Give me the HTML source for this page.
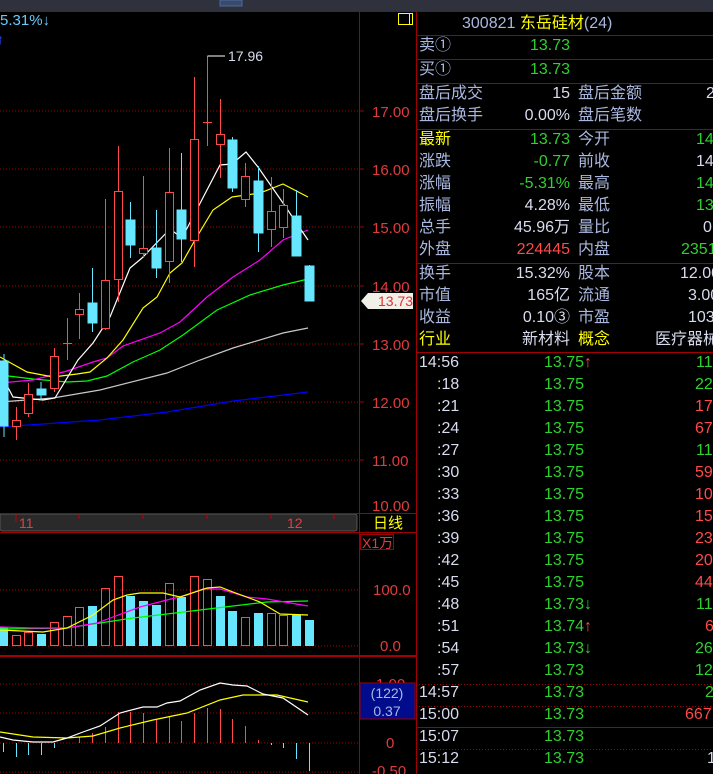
<!DOCTYPE html>
<html><head><meta charset="utf-8"><style>
html,body{margin:0;padding:0;background:#000;width:713px;height:774px;overflow:hidden;position:relative;font-family:"Liberation Sans","Noto Sans CJK SC",sans-serif}
.t{position:absolute;font-size:16px;line-height:18px;white-space:nowrap}
.l{color:#aab8e0}.g{color:#2fd02f}.r{color:#ff4a4a}.y{color:#ffff00}.w{color:#d8dcee}
.ra{text-align:right}
</style></head><body>
<svg width="713" height="774" style="position:absolute;left:0;top:0" xmlns="http://www.w3.org/2000/svg" font-family="Liberation Sans, Noto Sans CJK SC, sans-serif">
<rect x="0" y="0" width="713" height="11" fill="#2f323c"/>
<rect x="220" y="0" width="22" height="6" fill="#3a4a6a" stroke="#4a6aa0"/>
<line x1="0" y1="11.5" x2="713" y2="11.5" stroke="#a00000"/>
<g stroke="#a00000" stroke-dasharray="1,2">
<line x1="0" y1="111" x2="359" y2="111"/><line x1="0" y1="169" x2="359" y2="169"/><line x1="0" y1="227" x2="359" y2="227"/><line x1="0" y1="286" x2="359" y2="286"/><line x1="0" y1="344" x2="359" y2="344"/><line x1="0" y1="402" x2="359" y2="402"/><line x1="0" y1="460" x2="359" y2="460"/>
<line x1="0" y1="590" x2="359" y2="590"/><line x1="0" y1="646" x2="359" y2="646"/>
<line x1="0" y1="684" x2="359" y2="684"/><line x1="0" y1="713" x2="359" y2="713"/><line x1="0" y1="743" x2="359" y2="743"/><line x1="0" y1="772" x2="359" y2="772"/>
</g>
<line x1="359.5" y1="12" x2="359.5" y2="774" stroke="#a00000"/>
<line x1="416.5" y1="12" x2="416.5" y2="774" stroke="#a00000"/>
<rect x="0" y="514" width="357" height="17" fill="#2a2a2a" stroke="#555" rx="2"/>
<line x1="0" y1="513.5" x2="416" y2="513.5" stroke="#a00000"/>
<line x1="0" y1="532.5" x2="416" y2="532.5" stroke="#a00000"/>
<g stroke="#c00000" stroke-width="1"><line x1="16" y1="514" x2="16" y2="522"/><line x1="79" y1="514" x2="79" y2="519"/><line x1="143" y1="514" x2="143" y2="519"/><line x1="207" y1="514" x2="207" y2="519"/><line x1="271" y1="514" x2="271" y2="519"/><line x1="334" y1="514" x2="334" y2="519"/></g>
<text x="19" y="528" fill="#e04040" font-size="14">11</text>
<text x="287" y="528" fill="#e04040" font-size="14">12</text>
<line x1="0" y1="656" x2="416" y2="656" stroke="#a00000" stroke-width="2"/>
<g fill="#e03c3c" font-size="15">
<text x="372" y="117">17.00</text><text x="372" y="175">16.00</text><text x="372" y="233">15.00</text><text x="372" y="292">14.00</text><text x="372" y="350">13.00</text><text x="372" y="408">12.00</text><text x="372" y="466">11.00</text><text x="372" y="511">10.00</text>
<text x="373" y="595">100.0</text><text x="380" y="651">0.0</text><text x="386" y="748">0</text><text x="372" y="776">-0.50</text><text x="376" y="689">1.00</text>
</g>
<g stroke="#a00000"><line x1="359" y1="111" x2="364" y2="111"/><line x1="359" y1="169" x2="364" y2="169"/><line x1="359" y1="227" x2="364" y2="227"/><line x1="359" y1="286" x2="364" y2="286"/><line x1="359" y1="344" x2="364" y2="344"/><line x1="359" y1="402" x2="364" y2="402"/><line x1="359" y1="460" x2="364" y2="460"/></g>
<polygon points="361,301 368,293 413,293 413,309 368,309" fill="#f0f0e8"/>
<text x="378" y="306" fill="#e03030" font-size="14">13.73</text>
<text x="373" y="528" fill="#ffff00" font-size="15">日线</text>
<rect x="360.5" y="534.5" width="33" height="15" fill="none" stroke="#a00000"/>
<text x="362" y="548" fill="#e03c3c" font-size="14">X1万</text>
<rect x="360" y="683" width="55" height="36" fill="#000c8c" stroke="#a00000"/>
<text x="387" y="698" fill="#aab8e0" font-size="14" text-anchor="middle">(122)</text>
<text x="387" y="716" fill="#aab8e0" font-size="14" text-anchor="middle">0.37</text>
<rect x="398.5" y="13.5" width="14" height="11" fill="none" stroke="#ffff00"/>
<line x1="409.5" y1="13" x2="409.5" y2="25" stroke="#ffff00"/>
<text x="0" y="25" fill="#66ccff" font-size="15">5.31%↓</text>
<text x="-3" y="44" fill="#2244ff" font-size="14">↑</text>
<g fill="none" stroke-width="1.2">
<polyline stroke="#0000ff" points="0,427 100,420 167,412 233,401 308,392"/>
<polyline stroke="#c8c8c8" points="0,402 53,398 100,390 167,373 200,360 233,348 283,333 308,328"/>
<polyline stroke="#00ff00" points="0,375 33,379 67,382 87,381 107,376 133,362 160,350 183,335 217,310 250,295 283,285 308,279"/>
<polyline stroke="#ff00ff" points="0,383 33,380 67,371 93,362 107,358 123,346 160,333 180,322 207,297 233,277 260,260 283,240 308,230"/>
<polyline stroke="#ffff00" points="0,357 27,372 53,377 77,374 90,372 107,358 123,340 143,308 157,297 170,273 182,263 195,240 213,210 232,197 260,193 283,184 308,197"/>
<polyline stroke="#ffffff" points="3,378 13,397 43,400 55,398 78,360 93,343 110,317 130,268 142,258 170,229 182,238 220,165 232,164 246,152 258,167 283,203 308,240"/>
</g>
<g stroke-width="1">
<g stroke="#66e6ff" fill="#66e6ff">
<line x1="4" y1="354" x2="4" y2="437"/><rect x="0" y="361" width="8" height="65"/>
<line x1="41" y1="382" x2="41" y2="400"/><rect x="37" y="389" width="9" height="6"/>
<line x1="92.5" y1="268" x2="92.5" y2="332"/><rect x="88" y="303" width="9" height="20"/>
<line x1="130.5" y1="202" x2="130.5" y2="258"/><rect x="126" y="220" width="9" height="25"/>
<line x1="156.5" y1="210" x2="156.5" y2="278"/><rect x="152" y="248" width="9" height="20"/>
<line x1="181.5" y1="153" x2="181.5" y2="262"/><rect x="177" y="210" width="9" height="29"/>
<line x1="232.5" y1="137" x2="232.5" y2="192"/><rect x="228" y="140" width="9" height="48"/>
<line x1="258.5" y1="166" x2="258.5" y2="252"/><rect x="254" y="181" width="9" height="52"/>
<line x1="296.5" y1="190" x2="296.5" y2="256"/><rect x="292" y="216" width="9" height="40"/>
<line x1="309.5" y1="265" x2="309.5" y2="301"/><rect x="305" y="266" width="9" height="35"/>
</g>
<g stroke="#ff4a4a" fill="#000">
<line x1="16.5" y1="407" x2="16.5" y2="440"/><rect x="12.5" y="420.5" width="8" height="6"/>
<line x1="28.5" y1="383" x2="28.5" y2="417"/><rect x="24.5" y="394.5" width="8" height="19"/>
<line x1="54.5" y1="348" x2="54.5" y2="392"/><rect x="50.5" y="356.5" width="8" height="32"/>
<line x1="67.5" y1="318" x2="67.5" y2="360"/><line x1="63" y1="343.5" x2="72" y2="343.5"/>
<line x1="79.5" y1="293" x2="79.5" y2="339"/><rect x="75.5" y="309.5" width="8" height="5"/>
<line x1="105.5" y1="199" x2="105.5" y2="330"/><rect x="101.5" y="280.5" width="8" height="48"/>
<line x1="118.5" y1="146" x2="118.5" y2="302"/><rect x="114.5" y="191.5" width="8" height="88"/>
<line x1="143.5" y1="176" x2="143.5" y2="258"/><rect x="139.5" y="248.5" width="8" height="5"/>
<line x1="169.5" y1="148" x2="169.5" y2="283"/><rect x="165.5" y="192.5" width="8" height="69"/>
<line x1="194.5" y1="77" x2="194.5" y2="267"/><rect x="190.5" y="139.5" width="8" height="101"/>
<line x1="207.5" y1="56" x2="207.5" y2="146"/><line x1="203" y1="122.5" x2="212" y2="122.5"/>
<line x1="220.5" y1="99" x2="220.5" y2="178"/><rect x="216.5" y="134.5" width="8" height="10"/>
<line x1="245.5" y1="163" x2="245.5" y2="207"/><rect x="241.5" y="176.5" width="8" height="23"/>
<line x1="271.5" y1="177" x2="271.5" y2="247"/><rect x="267.5" y="211.5" width="8" height="18"/>
<line x1="283.5" y1="189" x2="283.5" y2="238"/><rect x="279.5" y="205.5" width="8" height="22"/>
</g>
</g>
<polyline points="207.5,56 225,56" stroke="#fff" fill="none"/>
<text x="228" y="61" fill="#d8dcee" font-size="14">17.96</text>
<g fill="#66e6ff">
<rect x="0" y="627" width="8" height="19"/><rect x="37" y="634" width="9" height="12"/><rect x="88" y="606" width="9" height="40"/><rect x="126" y="596" width="9" height="50"/><rect x="139" y="601" width="9" height="45"/><rect x="152" y="605" width="9" height="41"/><rect x="177" y="597" width="9" height="49"/><rect x="216" y="596" width="9" height="50"/><rect x="228" y="611" width="9" height="35"/><rect x="254" y="613" width="9" height="33"/><rect x="292" y="615" width="9" height="31"/><rect x="305" y="620" width="9" height="26"/>
</g>
<g fill="none" stroke="#ff4a4a">
<rect x="12.5" y="635.5" width="8" height="10"/><rect x="24.5" y="632.5" width="8" height="13"/><rect x="50.5" y="622.5" width="8" height="23"/><rect x="63.5" y="616.5" width="8" height="29"/><rect x="75.5" y="607.5" width="8" height="38"/><rect x="101.5" y="588.5" width="8" height="57"/><rect x="114.5" y="576.5" width="8" height="69"/><rect x="165.5" y="583.5" width="8" height="62"/><rect x="190.5" y="576.5" width="8" height="69"/><rect x="203.5" y="579.5" width="8" height="66"/><rect x="241.5" y="617.5" width="8" height="28"/><rect x="267.5" y="613.5" width="8" height="32"/><rect x="279.5" y="615.5" width="8" height="30"/>
</g>
<g fill="none" stroke-width="1.2">
<polyline stroke="#00ff00" points="0,629 67,628 100,623 133,618 167,614 200,610 233,606 267,602 308,601"/>
<polyline stroke="#ff00ff" points="0,627 33,628 67,628 97,623 113,617 140,607 167,600 187,595 203,589 220,589 247,597 267,599 308,606"/>
<polyline stroke="#ffff00" points="0,630 43,632 67,628 93,615 113,600 127,595 140,593 163,593 180,597 207,588 220,587 233,592 260,602 280,614 308,615"/>
</g>
<g stroke="#ff4a4a"><line x1="79.5" y1="743" x2="79.5" y2="737"/><line x1="92.5" y1="743" x2="92.5" y2="733"/><line x1="105.5" y1="743" x2="105.5" y2="727"/><line x1="118.5" y1="743" x2="118.5" y2="712"/><line x1="130.5" y1="743" x2="130.5" y2="712"/><line x1="143.5" y1="743" x2="143.5" y2="713"/><line x1="156.5" y1="743" x2="156.5" y2="720"/><line x1="169.5" y1="743" x2="169.5" y2="716"/><line x1="181.5" y1="743" x2="181.5" y2="721"/><line x1="194.5" y1="743" x2="194.5" y2="713"/><line x1="207.5" y1="743" x2="207.5" y2="708"/><line x1="220.5" y1="743" x2="220.5" y2="709"/><line x1="232.5" y1="743" x2="232.5" y2="719"/><line x1="245.5" y1="743" x2="245.5" y2="726"/><line x1="258.5" y1="743" x2="258.5" y2="740"/></g>
<g stroke="#66e6ff"><line x1="3.5" y1="743" x2="3.5" y2="752"/><line x1="16.5" y1="743" x2="16.5" y2="757"/><line x1="28.5" y1="743" x2="28.5" y2="755"/><line x1="41.5" y1="743" x2="41.5" y2="755"/><line x1="54.5" y1="743" x2="54.5" y2="748"/><line x1="271.5" y1="743" x2="271.5" y2="745"/><line x1="283.5" y1="743" x2="283.5" y2="748"/><line x1="296.5" y1="743" x2="296.5" y2="759"/><line x1="309.5" y1="743" x2="309.5" y2="771"/></g>
<g fill="none" stroke-width="1.2">
<polyline stroke="#ffff00" points="0,732 33,737 67,738 93,736 120,728 153,720 187,713 220,700 243,695 277,695 308,702"/>
<polyline stroke="#ffffff" points="0,737 13,740 33,742 53,742 67,738 83,732 100,726 120,713 143,707 157,707 167,703 180,701 200,690 220,683 233,685 247,686 263,694 283,698 308,715"/>
</g>
<g stroke="#a00000"><line x1="416" y1="35.5" x2="713" y2="35.5"/><line x1="416" y1="59.5" x2="713" y2="59.5"/><line x1="416" y1="83.5" x2="713" y2="83.5"/><line x1="416" y1="129.5" x2="713" y2="129.5"/><line x1="416" y1="263.5" x2="713" y2="263.5"/><line x1="416" y1="352.5" x2="713" y2="352.5"/><line x1="416" y1="727.5" x2="713" y2="727.5"/></g>
<g stroke="#a00000" stroke-dasharray="1,2"><line x1="416" y1="684.5" x2="713" y2="684.5"/><line x1="416" y1="706.5" x2="713" y2="706.5"/><line x1="416" y1="749.5" x2="713" y2="749.5"/></g>
</svg>
<div class="t" style="left:462px;top:15px;width:150px;text-align:center"><span class="l">300821 </span><span class="y">东岳硅材</span><span class="l">(24)</span></div>
<div class="t l" style="left:419px;top:37px">卖①</div><div class="t g" style="left:530px;top:37px">13.73</div>
<div class="t l" style="left:419px;top:61px">买①</div><div class="t g" style="left:530px;top:61px">13.73</div>
<div class="t l" style="left:419px;top:85px">盘后成交</div><div class="t w ra" style="left:500px;top:85px;width:70px">15</div><div class="t l" style="left:578px;top:85px">盘后金额</div><div class="t w" style="left:706px;top:85px">2</div>
<div class="t l" style="left:419px;top:107px">盘后换手</div><div class="t w ra" style="left:500px;top:107px;width:70px">0.00%</div><div class="t l" style="left:578px;top:107px">盘后笔数</div>
<div class="t y" style="left:419px;top:131px">最新</div><div class="t g ra" style="left:480px;top:131px;width:90px">13.73</div><div class="t l" style="left:578px;top:131px">今开</div><div class="t g" style="left:696px;top:131px">14.21</div>
<div class="t l" style="left:419px;top:153px">涨跌</div><div class="t g ra" style="left:480px;top:153px;width:90px">-0.77</div><div class="t l" style="left:578px;top:153px">前收</div><div class="t w" style="left:696px;top:153px">14.50</div>
<div class="t l" style="left:419px;top:175px">涨幅</div><div class="t g ra" style="left:480px;top:175px;width:90px">-5.31%</div><div class="t l" style="left:578px;top:175px">最高</div><div class="t g" style="left:696px;top:175px">14.30</div>
<div class="t l" style="left:419px;top:197px">振幅</div><div class="t w ra" style="left:480px;top:197px;width:90px">4.28%</div><div class="t l" style="left:578px;top:197px">最低</div><div class="t g" style="left:696px;top:197px">13.68</div>
<div class="t l" style="left:419px;top:219px">总手</div><div class="t w ra" style="left:480px;top:219px;width:90px">45.96万</div><div class="t l" style="left:578px;top:219px">量比</div><div class="t w" style="left:703px;top:219px">0.9</div>
<div class="t l" style="left:419px;top:241px">外盘</div><div class="t r ra" style="left:480px;top:241px;width:90px">224445</div><div class="t l" style="left:578px;top:241px">内盘</div><div class="t g" style="left:681px;top:241px">235151</div>
<div class="t l" style="left:419px;top:265px">换手</div><div class="t w ra" style="left:480px;top:265px;width:90px">15.32%</div><div class="t l" style="left:578px;top:265px">股本</div><div class="t w" style="left:680px;top:265px">12.00亿</div>
<div class="t l" style="left:419px;top:287px">市值</div><div class="t w ra" style="left:480px;top:287px;width:90px">165亿</div><div class="t l" style="left:578px;top:287px">流通</div><div class="t w" style="left:688px;top:287px">3.00亿</div>
<div class="t l" style="left:419px;top:309px">收益</div><div class="t w ra" style="left:480px;top:309px;width:90px">0.10③</div><div class="t l" style="left:578px;top:309px">市盈</div><div class="t w" style="left:688px;top:309px">103.3</div>
<div class="t y" style="left:419px;top:331px">行业</div><div class="t w ra" style="left:480px;top:331px;width:90px">新材料</div><div class="t y" style="left:578px;top:331px">概念</div><div class="t w" style="left:655px;top:331px">医疗器械</div>
<div class="t w" style="left:419px;top:354px">14:56</div><div class="t g" style="left:544px;top:354px">13.75<span class="r">↑</span></div><div class="t g" style="left:696px;top:354px">11</div>
<div class="t w" style="left:437px;top:376px">:18</div><div class="t g" style="left:544px;top:376px">13.75</div><div class="t g" style="left:695px;top:376px">22</div>
<div class="t w" style="left:437px;top:398px">:21</div><div class="t g" style="left:544px;top:398px">13.75</div><div class="t r" style="left:695px;top:398px">17</div>
<div class="t w" style="left:437px;top:420px">:24</div><div class="t g" style="left:544px;top:420px">13.75</div><div class="t r" style="left:695px;top:420px">67</div>
<div class="t w" style="left:437px;top:442px">:27</div><div class="t g" style="left:544px;top:442px">13.75</div><div class="t g" style="left:696px;top:442px">11</div>
<div class="t w" style="left:437px;top:464px">:30</div><div class="t g" style="left:544px;top:464px">13.75</div><div class="t r" style="left:695px;top:464px">59</div>
<div class="t w" style="left:437px;top:486px">:33</div><div class="t g" style="left:544px;top:486px">13.75</div><div class="t r" style="left:695px;top:486px">10</div>
<div class="t w" style="left:437px;top:508px">:36</div><div class="t g" style="left:544px;top:508px">13.75</div><div class="t r" style="left:695px;top:508px">15</div>
<div class="t w" style="left:437px;top:530px">:39</div><div class="t g" style="left:544px;top:530px">13.75</div><div class="t r" style="left:695px;top:530px">23</div>
<div class="t w" style="left:437px;top:552px">:42</div><div class="t g" style="left:544px;top:552px">13.75</div><div class="t r" style="left:695px;top:552px">20</div>
<div class="t w" style="left:437px;top:574px">:45</div><div class="t g" style="left:544px;top:574px">13.75</div><div class="t r" style="left:695px;top:574px">44</div>
<div class="t w" style="left:437px;top:596px">:48</div><div class="t g" style="left:544px;top:596px">13.73↓</div><div class="t g" style="left:696px;top:596px">11</div>
<div class="t w" style="left:437px;top:618px">:51</div><div class="t g" style="left:544px;top:618px">13.74<span class="r">↑</span></div><div class="t r" style="left:705px;top:618px">6</div>
<div class="t w" style="left:437px;top:640px">:54</div><div class="t g" style="left:544px;top:640px">13.73↓</div><div class="t g" style="left:695px;top:640px">26</div>
<div class="t w" style="left:437px;top:662px">:57</div><div class="t g" style="left:544px;top:662px">13.73</div><div class="t g" style="left:695px;top:662px">12</div>
<div class="t w" style="left:419px;top:684px">14:57</div><div class="t g" style="left:544px;top:684px">13.73</div><div class="t g" style="left:705px;top:684px">2</div>
<div class="t w" style="left:419px;top:706px">15:00</div><div class="t g" style="left:544px;top:706px">13.73</div><div class="t r" style="left:685px;top:706px">667</div>
<div class="t w" style="left:419px;top:728px">15:07</div><div class="t g" style="left:544px;top:728px">13.73</div>
<div class="t w" style="left:419px;top:750px">15:12</div><div class="t g" style="left:544px;top:750px">13.73</div><div class="t w" style="left:707px;top:750px">1</div>
</body></html>
